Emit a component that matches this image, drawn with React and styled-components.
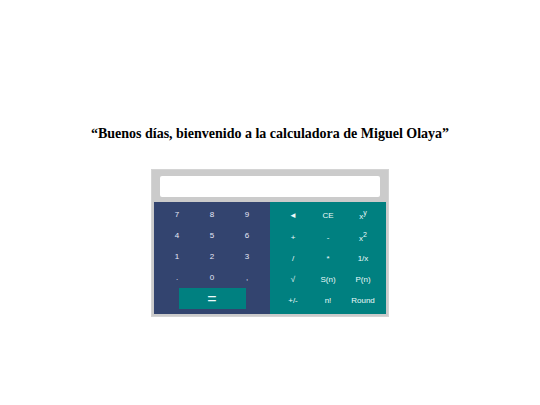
import React, { useState } from "react";
import styled, { createGlobalStyle } from "styled-components";

const numberKeys = ["7", "8", "9", "4", "5", "6", "1", "2", "3", ".", "0", ","];

const operationKeys = [
  { id: "back", label: "◄" },
  { id: "clear", label: "CE" },
  { id: "power", label: "x", exponent: "y" },
  { id: "add", label: "+" },
  { id: "subtract", label: "-" },
  { id: "square", label: "x", exponent: "2" },
  { id: "divide", label: "/" },
  { id: "multiply", label: "*" },
  { id: "inverse", label: "1/x" },
  { id: "root", label: "√" },
  { id: "sum", label: "S(n)" },
  { id: "product", label: "P(n)" },
  { id: "sign", label: "+/-" },
  { id: "factorial", label: "n!" },
  { id: "round", label: "Round" },
];

function App() {
  const [value, setValue] = useState("");

  const onOperation = (id) => {
    if (id === "clear") setValue("");
    if (id === "back") setValue(value.slice(0, -1));
  };

  return (
    <>
      <GlobalStyle />
      <Page>
        <Title>“Buenos días, bienvenido a la calculadora de Miguel Olaya”</Title>
        <Calculator>
          <Display
            type="text"
            aria-label="Resultado"
            value={value}
            onChange={(e) => setValue(e.target.value)}
          />
          <Panels>
            <Panel $color="#33446f">
              <Keys>
                {numberKeys.map((key) => (
                  <Key key={key} $color="#e6e8f8" onClick={() => setValue(value + key)}>
                    {key}
                  </Key>
                ))}
              </Keys>
              <Equals>=</Equals>
            </Panel>
            <Panel $color="#008080">
              <Keys $rows="22px 22px">
                {operationKeys.map(({ id, label, exponent }) => (
                  <Key key={id} $color="#ecfafa" onClick={() => onOperation(id)}>
                    <span>
                      {label}
                      {exponent && <Exponent>{exponent}</Exponent>}
                    </span>
                  </Key>
                ))}
              </Keys>
            </Panel>
          </Panels>
        </Calculator>
      </Page>
    </>
  );
}

export default App;

const GlobalStyle = createGlobalStyle`
  * {
    box-sizing: border-box;
  }
  body {
    margin: 0;
    background: #fff;
  }
`;

const Page = styled.main`
  display: flex;
  flex-direction: column;
  align-items: center;
  padding-top: 125px;
`;

const Title = styled.h1`
  margin: 0 0 26px;
  font: bold 14px/18px "Liberation Serif", serif;
  color: #000;
  text-align: center;
`;

const Calculator = styled.section`
  display: flex;
  flex-direction: column;
  padding: 6px 2px 2px;
  border: 1px solid #d4d4d4;
  background: #cbcbcb;
`;

const Display = styled.input`
  height: 21px;
  min-width: 0;
  margin: 0 6px 5px;
  padding: 0 4px;
  border: 0;
  border-radius: 2px;
  background: #fff;
  font: 10px "Liberation Sans", sans-serif;
  text-align: right;
`;

const Panels = styled.div`
  display: grid;
  grid-template-columns: 116px 116px;
`;

const Panel = styled.div`
  display: flex;
  flex-direction: column;
  align-items: center;
  padding: 2px 5px 3px;
  min-height: 112px;
  background: ${(props) => props.$color};
`;

const Keys = styled.div`
  display: grid;
  grid-template-columns: repeat(3, 35px);
  grid-template-rows: ${(props) => props.$rows || "none"};
  grid-auto-rows: 21px;
`;

const Key = styled.button`
  display: flex;
  align-items: center;
  justify-content: center;
  padding: 0;
  border: 0;
  background: none;
  color: ${(props) => props.$color};
  font: 8px "Liberation Sans", sans-serif;
  cursor: pointer;
`;

const Exponent = styled.sup`
  font-size: 7px;
`;

const Equals = styled.button`
  width: 67px;
  height: 21px;
  padding: 0;
  border: 0;
  background: #008080;
  color: #ecfafa;
  font: 16px/21px "Liberation Sans", sans-serif;
  cursor: pointer;
`;
